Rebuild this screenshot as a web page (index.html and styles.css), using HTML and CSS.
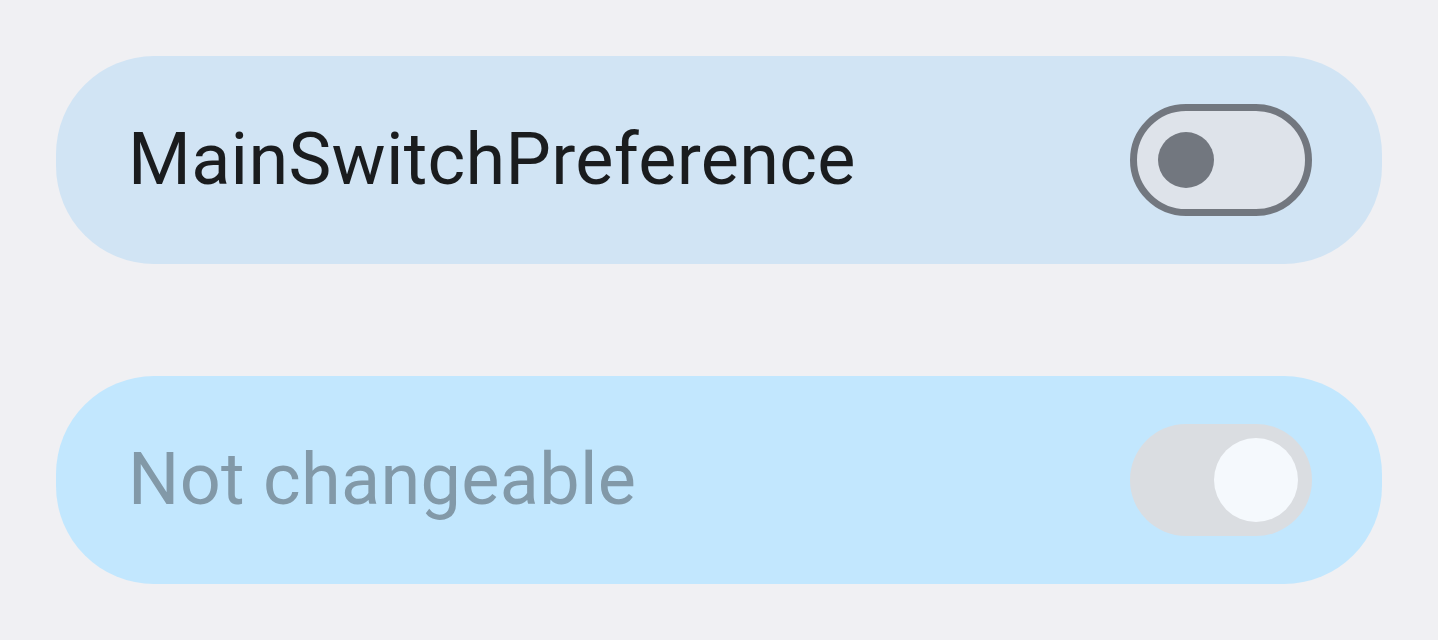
FILE: index.html
```html
<!DOCTYPE html>
<html>
<head>
<meta charset="utf-8">
<link rel="stylesheet" href="styles.css">
</head>
<body>
<div class="list">
  <div class="pref pref-main">
    <span class="title">MainSwitchPreference</span>
    <div class="switch switch-off"><div class="thumb"></div></div>
  </div>
  <div class="pref pref-disabled">
    <span class="title">Not changeable</span>
    <div class="switch switch-on-disabled"><div class="thumb"></div></div>
  </div>
</div>
</body>
</html>
```
FILE: styles.css
```css
html, body {
  margin: 0;
  padding: 0;
  background: #f0f0f3;
}
body {
  width: 1438px;
  height: 640px;
  overflow: hidden;
  font-family: Roboto, "Noto Sans", sans-serif;
}
.list {
  display: flex;
  flex-direction: column;
  gap: 112px;
  padding: 56px 56px 0 56px;
}
.pref {
  height: 208px;
  border-radius: 98px;
  display: flex;
  align-items: center;
  justify-content: space-between;
  padding: 0 70px 0 72px;
  box-sizing: border-box;
}
.pref-main {
  background: #d1e4f4;
}
.pref-disabled {
  background: #c2e7fe;
}
.title {
  font-size: 72px;
  letter-spacing: 0.3px;
  line-height: 1;
}
.pref-main .title {
  color: #1a1c1e;
}
.pref-disabled .title {
  color: #8299a8;
}
.switch {
  width: 182px;
  height: 112px;
  border-radius: 56px;
  box-sizing: border-box;
  display: flex;
  align-items: center;
}
.switch-off {
  background: #dee3ea;
  border: 7px solid #72777f;
  padding-left: 21px;
}
.switch-off .thumb {
  width: 56px;
  height: 56px;
  border-radius: 50%;
  background: #72777f;
}
.switch-on-disabled {
  background: #dadde1;
  justify-content: flex-end;
  padding-right: 14px;
}
.switch-on-disabled .thumb {
  width: 84px;
  height: 84px;
  border-radius: 50%;
  background: #f5f9fd;
}
```
